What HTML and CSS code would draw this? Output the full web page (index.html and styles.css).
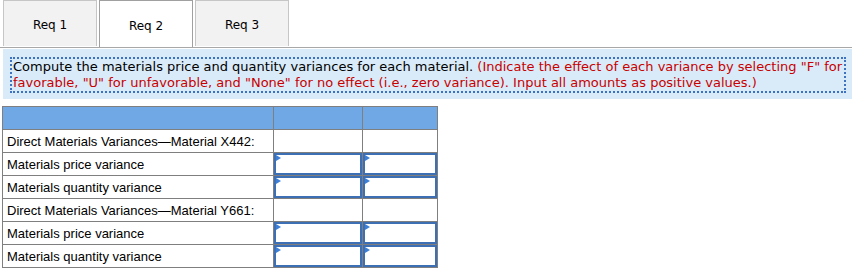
FILE: index.html
```html
<!DOCTYPE html>
<html lang="en">
<head>
    <meta charset="UTF-8">
    <title>Req 2</title>
    <link rel="stylesheet" href="styles.css">
</head>
<body>
    <div class="tabs">
        <div class="tab">Req 1</div>
        <div class="tab active">Req 2</div>
        <div class="tab">Req 3</div>
    </div>
    <div class="panel">
        <div class="instructions">
            Compute the materials price and quantity variances for each material. <span class="hint">(Indicate the effect of each variance by selecting "F" for<br>favorable, "U" for unfavorable, and "None" for no effect (i.e., zero variance). Input all amounts as positive values.)</span>
        </div>
    </div>
    <table class="grid">
        <tr class="head"><th></th><th></th><th></th></tr>
        <tr><td>Direct Materials Variances—Material X442:</td><td></td><td></td></tr>
        <tr><td>Materials price variance</td><td class="inp"><div class="box"></div></td><td class="inp"><div class="box"></div></td></tr>
        <tr><td>Materials quantity variance</td><td class="inp"><div class="box"></div></td><td class="inp"><div class="box"></div></td></tr>
        <tr><td>Direct Materials Variances—Material Y661:</td><td></td><td></td></tr>
        <tr><td>Materials price variance</td><td class="inp"><div class="box"></div></td><td class="inp"><div class="box"></div></td></tr>
        <tr><td>Materials quantity variance</td><td class="inp"><div class="box"></div></td><td class="inp"><div class="box"></div></td></tr>
    </table>
</body>
</html>
```

FILE: styles.css
```css
body {
    margin: 0;
    background: #fff;
    color: #000;
}
.tabs {
    display: flex;
    gap: 2px;
    padding-left: 3px;
    border-bottom: 1px solid #a8a8a8;
    height: 47px;
}
.tab {
    width: 94px;
    height: 46px;
    box-sizing: border-box;
    padding-top: 3px;
    border: 1px solid #c6c6c6;
    border-bottom: none;
    background: #f2f2f2;
    font-family: "DejaVu Sans", Verdana, sans-serif;
    font-size: 12px;
    display: flex;
    align-items: center;
    justify-content: center;
}
.tab.active {
    background: #fff;
    border-color: #a0a0a0;
    height: 47px;
}
.panel {
    margin: 1px 0 0 3px;
    background: #d9ebf9;
    padding: 8px 6px 6px 7px;
}
.instructions {
    border: 2px dotted #3d72c0;
    padding: 0 0 0 1px;
    font-family: "DejaVu Sans", Verdana, sans-serif;
    font-size: 13px;
    line-height: 16px;
    white-space: nowrap;
}
.hint {
    color: #c80000;
}
.grid {
    margin: 7px 0 0 2px;
    border-collapse: collapse;
    font-family: "Liberation Sans", Arial, sans-serif;
    font-size: 13px;
}
.grid th, .grid td {
    border: 1px solid #7f7f7f;
    height: 22px;
    padding: 0;
}
.grid th:nth-child(1), .grid td:nth-child(1) { width: 266px; padding-left: 4px; }
.grid th:nth-child(2), .grid td:nth-child(2) { width: 88px; }
.grid th:nth-child(3), .grid td:nth-child(3) { width: 74px; }
.grid .head th {
    background: #70a8e6;
}
.grid td.inp {
    position: relative;
}
.box {
    position: absolute;
    left: 0;
    top: 0;
    right: 0;
    bottom: 0;
    border: 2px solid #3d6fb5;
}
.box::before {
    content: "";
    position: absolute;
    left: 0;
    top: 0;
    border-left: 5px solid #3d7fd6;
    border-top: 3px solid transparent;
    border-bottom: 3px solid transparent;
}
```
